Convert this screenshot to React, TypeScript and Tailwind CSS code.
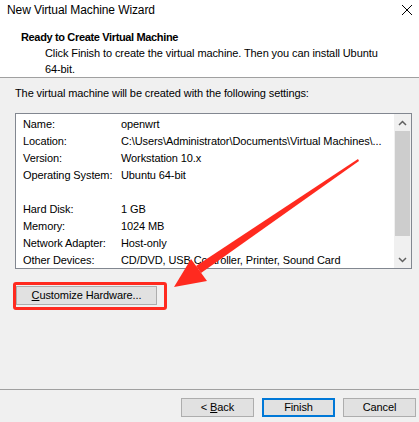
import React from "react";

const rows: [string, string][] = [
  ["Name:", "openwrt"],
  ["Location:", "C:\\Users\\Administrator\\Documents\\Virtual Machines\\..."],
  ["Version:", "Workstation 10.x"],
  ["Operating System:", "Ubuntu 64-bit"],
  ["", ""],
  ["Hard Disk:", "1 GB"],
  ["Memory:", "1024 MB"],
  ["Network Adapter:", "Host-only"],
  ["Other Devices:", "CD/DVD, USB Controller, Printer, Sound Card"],
];

export default function App() {
  return (
    <div
      className="relative w-[419px] h-[422px] flex flex-col bg-[#f0f0f0] text-black text-[11px] tracking-[-0.1px] overflow-hidden"
      style={{ fontFamily: '"Liberation Sans", Arial, sans-serif' }}
    >
      {/* header */}
      <div className="h-[78px] shrink-0 bg-white border-b border-[#a0a0a0] flex flex-col">
        <div className="h-[23px] flex items-center justify-between pl-[7px] pr-[5px]">
          <span className="text-[12px]">New Virtual Machine Wizard</span>
          <svg width="12" height="12" viewBox="0 0 12 12" className="mr-[1px]">
            <path d="M1 1L11 11M11 1L1 11" stroke="#000" strokeWidth="1" />
          </svg>
        </div>
        <div className="mt-[9px] pl-[21px] leading-[16px] font-bold tracking-[-0.35px]">Ready to Create Virtual Machine</div>
        <div className="pl-[45px] leading-[16px] pr-[20px]">
          Click Finish to create the virtual machine. Then you can install Ubuntu
          <br />
          64-bit.
        </div>
      </div>

      {/* body */}
      <div className="flex-1 flex flex-col px-[15px]">
        <div className="pt-[7px] leading-[16px]">The virtual machine will be created with the following settings:</div>
        <div className="mt-[12px] w-[397px] h-[156px] border border-[#828790] bg-white flex">
          <div className="flex-1 pt-[2px] pl-[7px] overflow-hidden">
            {rows.map(([k, v], i) => (
              <div key={i} className="h-[17px] flex items-center whitespace-nowrap">
                <span className="w-[98px] shrink-0">{k}</span>
                <span>{v}</span>
              </div>
            ))}
          </div>
          <div className="w-[17px] shrink-0 bg-[#f0f0f0] flex flex-col items-center">
            <div className="h-[17px] w-full flex items-center justify-center">
              <svg width="9" height="6" viewBox="0 0 9 6">
                <path d="M1 5L4.5 1.5L8 5" stroke="#606060" strokeWidth="1.5" fill="none" />
              </svg>
            </div>
            <div className="w-[15px] h-[105px] bg-[#cdcdcd]" />
            <div className="flex-1" />
            <div className="h-[17px] w-full flex items-center justify-center">
              <svg width="9" height="6" viewBox="0 0 9 6">
                <path d="M1 1L4.5 4.5L8 1" stroke="#606060" strokeWidth="1.5" fill="none" />
              </svg>
            </div>
          </div>
        </div>
        <div className="mt-[17px] ml-[1px] w-[141px] h-[19px] border border-[#adadad] bg-[#e1e1e1] flex items-center justify-center">
          <span>
            <span className="underline">C</span>ustomize Hardware...
          </span>
        </div>
      </div>

      {/* footer */}
      <div className="h-[33px] shrink-0 border-t border-[#a0a0a0] flex justify-end items-start pt-[8px] pr-[3px] gap-[8px]">
        <div className="w-[73px] h-[19px] border border-[#adadad] bg-[#e1e1e1] flex items-center justify-center">
          <span>
            &lt; <span className="underline">B</span>ack
          </span>
        </div>
        <div className="w-[73px] h-[19px] border-2 border-[#0078d7] bg-[#e1e1e1] flex items-center justify-center">
          Finish
        </div>
        <div className="w-[73px] h-[19px] border border-[#adadad] bg-[#e1e1e1] flex items-center justify-center">
          Cancel
        </div>
      </div>

      {/* annotation overlay */}
      <div className="absolute left-[13px] top-[282px] w-[154px] h-[28px] border-[3px] border-[#ff2a1f] rounded-[3px] pointer-events-none" />
      <svg className="absolute left-0 top-0 pointer-events-none" width="419" height="422" viewBox="0 0 419 422">
        <polygon
          points="358,159 359,161 201,273 196,266"
          fill="#ff2a1f"
        />
        <polygon points="174,287 191,259 207,281" fill="#ff2a1f" />
      </svg>
    </div>
  );
}
